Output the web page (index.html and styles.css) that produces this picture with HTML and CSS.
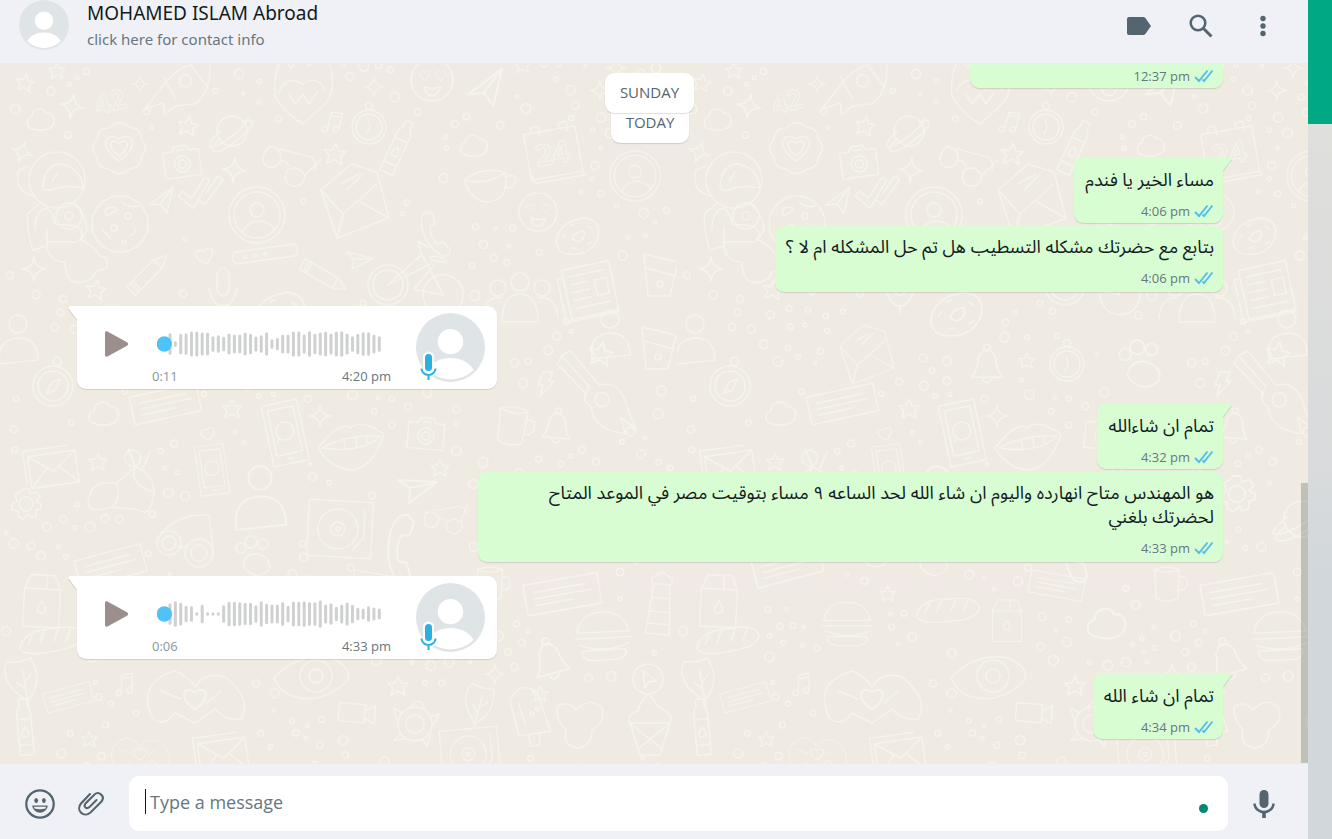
FILE: index.html
```html
<!DOCTYPE html>
<html lang="en">
<head>
<meta charset="utf-8">
<title>Chat</title>
<link rel="stylesheet" href="styles.css">
</head>
<body>
<svg class="defs" aria-hidden="true">
  <symbol id="avatar" viewBox="0 0 212 212"><circle cx="106" cy="106" r="106" fill="#dfe5e7"/><circle cx="106" cy="88" r="39" fill="#fff"/><path d="M35 175C48 150 76 138 106 138s58 12 71 37a101 101 0 0 1-142 0z" fill="#fff"/></symbol>
  <symbol id="ticks" viewBox="0 0 20 14"><path d="M1 8l4 4L13.500 1.500M8.500 10.500l1.500 1.500L18.500 1.500" fill="none" stroke="#53bdeb" stroke-width="1.900"/></symbol>
  <symbol id="tail-out" viewBox="0 0 9 14"><path d="M0 0H7Q9.500 1 8 3L0 14z" fill="#d9fdd3"/><path d="M8.500 3L0 14.500" stroke="#0002" fill="none"/></symbol>
  <symbol id="tail-in" viewBox="0 0 9 14"><path d="M9 0H2Q-.5 1 1 3L9 14z" fill="#fff"/><path d="M.5 3L9 14.500" stroke="#0002" fill="none"/></symbol>
  <symbol id="play" viewBox="0 0 24 26"><path d="M1.500 0Q0 0 0 2V24Q0 26 2 25.800L22.500 14.500Q24 13 22.500 11.500z" fill="#9c8e8c"/></symbol>
  <symbol id="voice-mic" viewBox="0 -4 19 32"><path d="M9.500 4v12" stroke="#fff" stroke-width="11" stroke-linecap="round"/><path d="M2.500 15a7 7 0 0 0 14 0M9.500 22v5" stroke="#fff" stroke-width="5" fill="none"/><path d="M2.500 15.500a7 6.500 0 0 0 14 0M9.500 22v5" stroke="#2bb0e0" stroke-width="2" fill="none"/><rect x="6" y="1" width="7" height="17" rx="3.500" fill="#2bb0e0"/></symbol>
</svg>
<div class="app">
  <main class="main">
    <header class="header">
      <svg class="header-avatar"><use href="#avatar"/></svg>
      <div class="contact">
        <h1 class="contact-name">MOHAMED ISLAM Abroad</h1>
        <span class="contact-info">click here for contact info</span>
      </div>
      <button class="icon-btn" aria-label="Label"><svg width="26" height="20" viewBox="0 0 26 20"><path d="M3 1H17Q18.500 1 19.500 2.200L25 10l-5.500 7.800Q18.500 19 17 19H3Q1 19 1 17V3Q1 1 3 1z" fill="#54656f"/></svg></button>
      <button class="icon-btn" aria-label="Search"><svg width="24" height="24" viewBox="0 0 24 24" fill="none" stroke="#54656f"><circle cx="9" cy="9" r="7.300" stroke-width="2.500"/><path d="M14.500 14.500l8 8" stroke-width="3"/></svg></button>
      <button class="icon-btn" aria-label="Menu"><svg width="6" height="22" viewBox="0 0 6 22" fill="#54656f"><circle cx="3" cy="3.500" r="2.700"/><circle cx="3" cy="11" r="2.700"/><circle cx="3" cy="18.500" r="2.700"/></svg></button>
    </header>
    <section class="chat">
      <svg class="wallpaper" aria-hidden="true">
        <defs>
          <pattern id="doodles" width="677" height="720" patternUnits="userSpaceOnUse"></pattern>
        </defs>
        <rect width="100%" height="100%" fill="url(#doodles)"/>
      </svg>
      <div class="sticky-date"><span class="chip">SUNDAY</span></div>
      <div class="messages">
        <article class="bubble out cut"><div class="meta"><time>12:37 pm</time><svg class="ticks"><use href="#ticks"/></svg></div></article>
        <span class="chip day">TODAY</span>
        <article class="bubble out first"><svg class="tail"><use href="#tail-out"/></svg><p class="text" dir="rtl" lang="ar">مساء الخير يا فندم</p><div class="meta"><time>4:06 pm</time><svg class="ticks"><use href="#ticks"/></svg></div></article>
        <article class="bubble out"><p class="text" dir="rtl" lang="ar">بتابع مع حضرتك مشكله التسطيب هل تم حل المشكله ام لا ؟</p><div class="meta"><time>4:06 pm</time><svg class="ticks"><use href="#ticks"/></svg></div></article>
        <article class="bubble in first">
          <svg class="tail"><use href="#tail-in"/></svg>
          <button class="play" aria-label="Play"><svg width="24" height="26"><use href="#play"/></svg></button>
          <div class="track">
            <svg class="wave" viewBox="0 0 675 90" data-bars="66 17 62 66 76 76 70 70 48 54 44 64 58 58 70 62 46 54 72 30 38 58 58 76 76 60 78 62 70 76 64 76 78 64 48 62 72 72 58 48"></svg>
            <div class="track-meta"><span class="length">0:11</span><time>4:20 pm</time></div>
          </div>
          <div class="voice-photo"><svg class="voice-avatar"><use href="#avatar"/></svg><svg class="voice-mic"><use href="#voice-mic"/></svg></div>
        </article>
        <article class="bubble out first"><svg class="tail"><use href="#tail-out"/></svg><p class="text" dir="rtl" lang="ar">تمام ان شاءالله</p><div class="meta"><time>4:32 pm</time><svg class="ticks"><use href="#ticks"/></svg></div></article>
        <article class="bubble out"><p class="text" dir="rtl" lang="ar">هو المهندس متاح انهارده واليوم ان شاء الله لحد الساعه ٩ مساء بتوقيت مصر في الموعد المتاح لحضرتك بلغني</p><div class="meta"><time>4:33 pm</time><svg class="ticks"><use href="#ticks"/></svg></div></article>
        <article class="bubble in first">
          <svg class="tail"><use href="#tail-in"/></svg>
          <button class="play" aria-label="Play"><svg width="24" height="26"><use href="#play"/></svg></button>
          <div class="track">
            <svg class="wave" viewBox="0 0 675 90" data-bars="66 78 70 50 48 12 56 11 11 11 54 74 74 72 68 68 54 78 62 58 58 72 50 76 74 78 72 72 84 58 66 44 58 70 56 38 34 48 40 34"></svg>
            <div class="track-meta"><span class="length">0:06</span><time>4:33 pm</time></div>
          </div>
          <div class="voice-photo"><svg class="voice-avatar"><use href="#avatar"/></svg><svg class="voice-mic"><use href="#voice-mic"/></svg></div>
        </article>
        <article class="bubble out first"><svg class="tail"><use href="#tail-out"/></svg><p class="text" dir="rtl" lang="ar">تمام ان شاء الله</p><div class="meta"><time>4:34 pm</time><svg class="ticks"><use href="#ticks"/></svg></div></article>
      </div>
      <div class="scrollbar"><div class="thumb"></div></div>
    </section>
    <footer class="composer">
      <button class="tool" aria-label="Emoji"><svg width="30" height="30" viewBox="0 0 30 30"><circle cx="15" cy="15" r="13.700" fill="none" stroke="#54656f" stroke-width="2.300"/><ellipse cx="11.200" cy="11.500" rx="1.900" ry="2.600" fill="#54656f"/><ellipse cx="18.900" cy="11.500" rx="1.900" ry="2.600" fill="#54656f"/><path d="M7.300 16.500H22.700C22 26 8 26 7.300 16.500z" fill="#54656f"/><path d="M9 17.800H21L20.500 19.500Q15 20.800 9.500 19.500z" fill="#f0f1f6"/></svg></button>
      <button class="tool" aria-label="Attach"><svg width="28" height="26" viewBox="0 0 28 26" fill="none" stroke="#54656f" stroke-width="2.100" stroke-linecap="round"><path d="M13 3L4 12.500C-1.500 19 6.500 27.500 13.500 21.500L24.500 10.500C28.500 5.500 22 -.5 17.500 3.500L8.500 12.500C6 16 9.500 18.500 12.500 16L19.500 9"/></svg></button>
      <div class="field">
        <span class="caret"></span>
        <input class="input" type="text" placeholder="Type a message" aria-label="Type a message">
        <span class="dot"></span>
      </div>
      <button class="record" aria-label="Record"><svg width="22" height="28" viewBox="0 0 22 28"><rect x="6.500" y="0" width="9" height="18" rx="4.500" fill="#54656f"/><path d="M1.500 13.500a9.500 8.500 0 0 0 19 0M11 22v6" fill="none" stroke="#54656f" stroke-width="2.400"/><path d="M11 22v6" stroke="#54656f" stroke-width="3.500"/></svg></button>
    </footer>
  </main>
  <aside class="side"></aside>
</div>
<script src="script.js"></script>
</body>
</html>
```
FILE: styles.css
```css
* { box-sizing: border-box; }
body { margin: 0; font-family: "Open Sans", "Noto Sans", "DejaVu Sans", sans-serif; color: #111b21; }
button { border: 0; background: none; padding: 0; display: flex; align-items: center; justify-content: center; }
svg { display: block; flex: none; }
.defs { position: absolute; width: 0; height: 0; }
.app { display: flex; height: 100vh; overflow: hidden; }
.main { flex: 1; min-width: 0; display: flex; flex-direction: column; }
.side { width: 24px; background: linear-gradient(#00a884 124px, #dfdfdc 124px, #d9dbdc 55%, #d1d7db 70%); }

.header { flex: none; display: flex; align-items: flex-start; height: 64px; padding-left: 19px; padding-right: 14px; background: #f0f1f6; border-bottom: 1px solid #e9ebf0; }
.header-avatar { width: 50px; height: 50px; }
.contact { flex: 1; margin-left: 18px; display: flex; flex-direction: column; font-family: "Noto Sans", "Open Sans", sans-serif; }
.contact-name { margin: 0; font-size: 19px; font-weight: 400; line-height: 26px; }
.contact-info { font-size: 15px; line-height: 26px; color: #667781; }
.icon-btn { width: 62px; height: 52px; }

.chat { position: relative; flex: 1; min-height: 0; display: flex; background: #efeae2; overflow: hidden; }
.wallpaper { position: absolute; inset: 0; width: 100%; height: 100%; }
.sticky-date { position: absolute; top: 9px; left: 0; right: 9px; display: flex; justify-content: center; z-index: 2; }
.chip { height: 40px; padding: 0 15px; border-radius: 9px; background: #fff; color: #54656f; font-size: 15px; line-height: 39px; box-shadow: 0 1px 1px #0b141a22; }
.messages { position: relative; flex: 1; display: flex; flex-direction: column; justify-content: flex-end; gap: 3px; padding: 0 78px 25px 77px; }
.day { align-self: center; margin-top: 12px; }
.bubble { position: relative; flex: none; border-radius: 9px; box-shadow: 0 1px 1px #0b141a22; }
.bubble.first { margin-top: 11px; }
.out { align-self: flex-end; max-width: 65%; padding: 9px 9px 4px 11px; background: #d9fdd3; }
.out.first { padding-top: 11px; padding-bottom: 2px; border-top-right-radius: 0; }
.cut { width: 253px; padding-top: 2px; padding-bottom: 2px; border-radius: 0 0 9px 9px; }
.tail { position: absolute; top: 0; width: 9px; height: 14px; }
.out .tail { left: 100%; }
.in .tail { right: 100%; }
.text { margin: 0 0 9px; font-family: "Noto Sans Arabic", "DejaVu Sans", sans-serif; font-size: 18px; line-height: 24px; }
.meta { display: flex; justify-content: flex-end; align-items: center; gap: 4px; height: 20px; font-size: 13px; line-height: 20px; color: #667781; }
.ticks { width: 20px; height: 14px; }
.in { align-self: flex-start; width: 420px; height: 83px; display: flex; background: #fff; border-top-left-radius: 0; padding: 7px 12px 7px 28px; }
.play { width: 24px; height: 62px; }
.track { flex: 1; margin-left: 23px; padding-top: 16px; }
.wave { width: 225px; height: 30px; margin-left: 5px; }
.track-meta { display: flex; justify-content: space-between; width: 239px; margin-top: 7px; font-size: 13px; line-height: 20px; color: #667781; }
.length { color: #8696a0; }
.voice-photo { position: relative; width: 69px; height: 69px; }
.voice-avatar { width: 69px; height: 69px; }
.voice-mic { position: absolute; left: 3px; bottom: 1px; width: 19px; height: 32px; }
.scrollbar { position: relative; width: 7px; display: flex; align-items: flex-end; padding-bottom: 1px; }
.thumb { width: 7px; height: 40%; background: #0b141a33; }

.composer { flex: none; display: flex; align-items: center; padding: 12px 0 8px 14px; background: #f0f1f6; }
.tool { width: 51px; height: 55px; }
.field { flex: 1; display: flex; align-items: center; height: 55px; margin-left: 13px; padding: 0 20px 4px 16px; border-radius: 10px; background: #fff; }
.caret { width: 1px; height: 25px; background: #111b21; }
.input { flex: 1; min-width: 0; border: 0; outline: 0; padding: 0 0 0 4px; background: none; font: 18px/26px "Open Sans", "Noto Sans", sans-serif; color: #111b21; }
.input::placeholder { color: #667781; opacity: 1; }
.dot { width: 9px; height: 9px; margin-top: 14px; border-radius: 50%; background: #008773; }
.record { width: 72px; height: 55px; margin-right: 8px; }

.doodle { fill: none; stroke: #f6f3ed; stroke-width: 1.5px; stroke-linejoin: round; stroke-linecap: round; }
.doodle text { font: 700 30px "Open Sans", sans-serif; stroke-width: 1px; }
```
FILE: script.js
```js
const NS = "http://www.w3.org/2000/svg";

// Waveforms: one rounded stroke per bar, then the playhead.
for (const wave of document.querySelectorAll(".wave")) {
  const d = wave.dataset.bars.split(" ").map((h, i) => {
    const half = Math.max(h / 2 - 5, 0.5);
    return `M${39 + i * 16.1} ${45 - half}v${half * 2}`;
  }).join("");
  wave.innerHTML = `<path d="${d}" stroke="#cfd0d1" stroke-width="9" stroke-linecap="round"/><circle cx="22" cy="45" r="23" fill="#4fc3f7"/>`;
}

// Wallpaper drawings, each centred on its own origin.
const circle = (x, y, r) => `<circle cx="${x}" cy="${y}" r="${r}"/>`;
const path = d => `<path d="${d}"/>`;
const heart = "M0 8C-14 -2 -8 -11 0 -5C8 -11 14 -2 0 8z";
const shapes = {
  star: path("M0-10L3-3L10-3L5 2L7 9L0 5L-7 9L-5 2L-10-3L-3-3z"),
  spark: path("M0-12Q1-1 12 0Q1 1 0 12Q-1 1-12 0Q-1-1 0-12z"),
  heart: path(heart),
  cloud: path("M-8 9C-16 8-15-2-9-3C-9-12 3-13 5-7C14-8 16 4 9 8Q2 12-8 9z"),
  badge: path("M-22-8Q-22-20-10-20Q0-30 10-21Q22-20 22-9Q31 0 22 9Q22 20 11 21Q0 30-10 21Q-22 20-22 9Q-31 0-22-8z") + path(heart) + path("M0 13C-23-3-12-17 0-9C12-17 23-3 0 13z"),
  camera: path("M-18-11H-9L-6-16H6L9-11H18V15H-18z") + circle(0, 2, 8) + circle(0, 2, 4) + path("M-4-12H4"),
  astro: circle(0, -50, 28) + path("M-14-44Q-12-66 4-66Q24-62 26-42Q8-46-6-40Q-15-39-14-44zM-5-48L1-58M-22-34Q-44-38-38-60L-28-64M-18-26L-30-16Q-28 12-24 20L-10 16V-2M16-27Q30-14 30 0L24 10M-10 16Q-8 32 8 32Q8 56 26 52Q36 50 38 42M24 10Q40 18 42 26Q52 26 50 38L38 42M-22 0Q-22-20-10-22Q-2-14-2-6L20-4Q30 4 20 12H-10") + circle(12, -14, 13) + circle(12, -14, 4),
  person: circle(0, 0, 28) + circle(0, 0, 23) + circle(0, -5, 7) + path("M-15 17Q-8 5 4 6Q14 8 17 14"),
  cookie: circle(0, 0, 28) + path("M-15-14Q-8-20-3-14L-14-8zM-18 5l8 9M14 2q4 8-4 9M2-22q6 6 16 4") + circle(-6, 4, 3) + circle(8, -8, 3) + circle(4, 18, 2),
  letter: path("M-34-4L-4-30L22-22L34 24L-18 44zM-34-4L-12 20L22-10M-12 20L-18 44M34 24L5 8M-14-10L4-20M-8-4L8-20"),
  planet: circle(0, 0, 15) + path("M-13 6Q-26 15-20 18Q-12 20 8 7Q24-3 21-7Q18-9 11-7M-12-2Q-34 16-16 12Q6 4 18-10"),
  clock: circle(0, 0, 17) + circle(0, 0, 13) + path("M-1-7Q3 0-2 7") + circle(0, -21, 3.5),
  bottle: path("M-7-12Q-7-20-4-22V-30H4V-22Q7-20 7-12V26H-7zM-7-10H7M-7 16H7M0-2Q-7 8 0 8Q7 8 0-2z"),
  shades: path("M-14-10L18-16Q26-14 27-6M-24-8Q-30 8-18 11Q-8 10-8 0Q-12-12-24-8zM-8 0Q-3-3 2 2M2 6Q2 20 14 18Q24 14 20 3Q8-4 2 6zM20 3L28-18"),
  check: path("M-20 0l5-4l8 8L8-16l5 3L-6 14zM0 6l6 5L26-12l-5-4L8 0"),
  plane: path("M-12 6L12-12L6 14L-1 5zM-1 5L12-12"),
  calendar: path("M-26-22H26V24H-26zM-26 18L-22 28H28L26 24M-18-22V-28H-10V-18M10-22V-28H18V-18") + `<text x="-18" y="12">24</text>`,
  answer: `<text x="-18" y="10">42</text>`,
  cup: path("M-22-8Q0-18 20-8Q20 16 2 18Q-18 18-22-8zQ0 2 20-8M20-4Q32-6 28 4Q22 10 17 6"),
  smile: circle(0, 0, 19) + `<g transform="translate(-7 -4) scale(.55)">${path(heart)}</g><g transform="translate(8 -4) scale(.55)">${path(heart)}</g>` + path("M-7 6Q0 9 8 6Q5 15 0 14Q-6 14-7 6z"),
  donut: path("M-22 6Q-20-14 6-18Q24-16 20 2Q12 20-8 18Q-20 18-22 6z") + path("M-6 3Q-2-6 6-5Q8 3 0 6zM-15 2l2-4M-8-10l4-2M10-10l4 3M10 8l4-2M-6 12h4"),
  phone: path("M-10-22Q-18-20-15-5Q-8 16 6 22Q14 22 13 15L6 8L0 10Q-7 2-7-7L-2-10L-4-20z"),
  bike: circle(-28, 14, 20) + circle(-28, 14, 15) + circle(28, 14, 20) + path("M-28 14L0-22L28 14H-2L14-14M-28 14L10-14M0-22L-6-34L6-30M8-20Q20-26 26-18H10"),
  news: path("M-24-24H24V26H-24zM-24-16H-30V28H24M-18-16H18M-18-8H0M-18 0H0M-18 8H0M-18 16H18M6-8H18V8H6z"),
  pencil: path("M-6-14L0-26L6-14V24H-6zM-6-14H6M-6 16H6M-6 19H6"),
  mic: path("M-6-12Q0-24 6-12V4Q0 16-6 4zM-14 2Q-10 20 0 20Q10 20 14 2M0 20V28"),
  ruler: path("M-30-6H30Q36 0 30 6H-30Q-36 0-30-6z") + circle(-20, 0, 1.5) + circle(-10, 0, 1.5) + circle(0, 0, 1.5),
  note: path("M-4 10V-10L8-12V6M-4-6L8-8") + circle(-7, 10, 3) + circle(5, 7, 3),
  compass: circle(0, 0, 20) + circle(0, 0, 15) + circle(0, -25, 4) + path("M-5 8L-2-3L6-8L3 4z"),
  card: path("M-34-12H34V16H-34zM-26-4H22M-26 2H26M-26 8H10"),
  mobile: path("M-18-30H18V32H-18zM-13-24H13V22H-13zM-3 27H3") + circle(0, -1, 9) + path("M-9 8l3-4"),
  lips: path("M-34 4Q-12-24-2-16Q8-26 32-10Q20 26-2 26Q-22 24-34 4zM-30 4Q-4-10 28-8Q10 10-30 4M-8-4L-6 6M4-6L5 4M14-8L16 0"),
  mug: path("M-14-16Q0-22 14-16L12 16Q0 22-12 16zQ0-10 14-16M14-8Q24-10 22 2Q18 8 13 6"),
  bell: path("M-14 12Q-8 4-8-6Q0-20 8-6Q8 4 14 12zM-4 14Q0 20 4 14") + circle(0, -15, 3),
  guitar: path("M-36-30L-28-36L4-4Q24-12 34 16L44 36L28 26L34 42Q0 40-2 18Q-14 14-6-2zM-36-30L-40-22L-8 6") + circle(8, 10, 7),
  gear: circle(0, 0, 7) + path("M-3-15H3L4-10L10-12L14-7L10-3L15 0V5L10 6L10 12L4 14L2 10L-3 15L-8 12L-8 7L-14 6L-14 0L-9-3L-11-9L-6-12z"),
  record: path("M-32-28H32V28H-32zM24-20V8L14 20") + circle(-2, 0, 20) + circle(-2, 0, 7) + circle(-2, 0, 2),
  goggles: circle(-16, 4, 12) + circle(14, 14, 14) + circle(-16, 4, 7) + circle(14, 14, 8) + path("M-24-6Q-4-26 24-24L28 10M-6 8L2 8"),
  paw: circle(-14, -8, 5) + circle(-4, -14, 6) + circle(8, -12, 5) + path("M-12 10Q-10-4 4-2Q18 4 14 14Q0 26-12 10z"),
  milk: path("M-18-10L-12-24H12L18-10V28H-18zM-18-10H18M4-24V-10M0 2Q-8 14 0 14Q8 14 0 2z"),
  bread: path("M-30 10Q-28-8 0-10Q28-16 32-4Q32 8 4 12Q-24 18-30 10zM-18-4l-4 10M-6-8l-4 12M8-10l-4 12M20-10l-4 12"),
  leaf: path("M0 22Q-26 0-14-20Q0-16 10-20Q20 6 0 22zM0 28V-10M0 4L8-4M0 10L-8 2"),
  hands: path("M-42 20Q-60-16-20-28Q-6-22 0-12Q10-28 30-22Q58 0 46 20Q30 22 20 10L0 24L-20 14Q-30 28-42 20zM-34-8L-14 0M26-8L12 4") + `<g transform="scale(1.3)">${path(heart)}</g>`,
  eye: path("M-38 2Q-14-24 20-18Q40-8 36 4Q10 30-20 20Q-32 16-38 2z") + circle(4, 0, 16) + circle(4, 0, 7),
  turtle: circle(0, 0, 17) + circle(0, 0, 9) + path("M-15-9L-24-12L-18 0M14-10L22-14L18-2M-12 12L-18 20L-6 16M10 14L16 20L17 6M-7-16Q0-30 7-16"),
  video: path("M-18-8H8V10H-18zM8-2L18-8V10L8 6"),
  ice: path("M-18-16Q-6-36 10-20L18 20H-14zM-4 20V32H6V20M-10-12L-6 10") + circle(2, 0, 2) + circle(8, -4, 2),
  blob: path("M-22-16Q-12-22-4-12Q10-26 22-14Q26 0 12 8Q12 24-2 26Q-18 24-14 8Q-26-4-22-16z"),
  cone: path("M-20 4Q-24-4-12-8Q-10-18 0-26Q4-16 12-10Q24-4 20 4zL-10 36H10L20 4M-20 4L12 30M20 4L-12 30"),
  cursor: circle(0, 0, 15) + path("M-5-8L8 2L1 3L-3 9z"),
  burger: path("M-26-4Q-22-24 0-24Q22-24 26-4zM-28 2H28M-24 8Q0 18 26 8M-22 14Q-22 24-10 24H12Q24 22 22 14z"),
  tower: path("M-8-20H8L12 30H-12zM-10-20V-26L0-32L10-26V-20M-9-6H9M-10 8H10M-11 20H11"),
  mail: path("M-26-14H22V18H-26zM-26-14L-2 4L22-14M-26 18L-8 0M22 18L4 0M-30 12V-20H14"),
  bug: path("M-8 30Q-36 44-32 22Q-30 6-8 6L8-14Q36-8 30 24Q28 32 16 28zM-8 6Q0 20-8 30M8-14Q4 4 30 8M8-14L-2-30M16-14L20-32") + circle(4, -22, 8),
  rocket: path("M-30 26L-16 4Q0-24 30-28Q36 0 20 16L0 20L-10 30L-12 18zM-14-8L0 14M10-24L30-2") + circle(8, -6, 6),
  flame: path("M-28 8Q-30-18-20-30L-12-20L0-34L6-22L22-36Q36-4 24 14L0 36Q-20 24-28 8zM-24 4Q-16-14 0-4Q14-14 22 2M-14 6L-8 16L0 6L6 16L14 4"),
  bolt: path("M-3-12H7L3-3H8L-6 12L-3 1H-8z"),
  torso: circle(0, -20, 9) + path("M-18 20Q-22-4 0-6Q20-6 20 16z"),
  flask: path("M-16-22L18-14L10 20H-12zM-14-8L16 0") + circle(0, 8, 3),
  people: circle(-22, -14, 8) + circle(0, -20, 9) + circle(22, -14, 8) + path("M-38 16Q-36-6-18-4M-18 20Q-18-8 0-8Q18-8 18 20zM18-4Q36-6 38 16")
};

const placed = [
  ["astro", 57, 166, 0, 1], ["badge", 119, 84, 0, 1], ["cloud", 41, 56, 0, 1], ["answer", 111, 38, -15, .9], ["rocket", 177, 22, 5, 1], ["camera", 182, 98, -8, 1],
  ["star", 188, 62, 10, 1], ["planet", 232, 67, -8, 1], ["spark", 234, 106, 5, 1], ["shades", 288, 100, 25, 1], ["flame", 303, 24, 0, 1], ["clock", 369, 63, 0, 1],
  ["note", 333, 58, 15, .9], ["star", 335, 90, 5, 1.1], ["bottle", 397, 85, 25, 1], ["letter", 355, 130, 0, 1], ["person", 257, 151, 0, 1], ["check", 198, 130, -5, 1],
  ["plane", 161, 135, 0, 1], ["cookie", 120, 160, 0, 1], ["calendar", 553, 88, -10, 1], ["cup", 487, 120, -10, 1], ["smile", 538, 148, 0, 1], ["person", 635, 112, 0, .9],
  ["donut", 578, 172, 0, 1], ["phone", 437, 170, 0, 1], ["bike", 418, 212, 10, 1], ["news", 590, 225, -12, 1], ["pencil", 148, 210, 45, 1], ["pencil", 323, 212, 120, 1],
  ["mic", 223, 222, 0, 1], ["ruler", 265, 190, -8, 1], ["heart", 205, 192, -15, 1], ["plane", 358, 193, 50, .9], ["spark", 34, 205, 0, 1], ["star", 96, 226, 8, 1],
  ["spark", 72, 42, 10, 1], ["spark", 22, 88, 20, .9], ["star", 25, 19, 10, .9], ["spark", 140, 20, 0, .7], ["flask", 660, 212, 0, 1], ["cloud", 474, 82, 0, 1],
  ["smile", 432, 16, 0, 1.1], ["plane", 485, 22, 0, 1.4], ["torso", 18, 280, 0, 1], ["people", 520, 238, 0, 1], ["torso", 610, 275, 0, 1], ["flask", 658, 285, 0, 1],
  ["compass", 53, 322, 10, 1], ["cloud", 104, 350, 0, 1.1], ["card", 165, 338, -12, 1], ["mobile", 285, 368, -12, 1], ["lips", 352, 380, 0, 1], ["camera", 426, 370, 5, 1],
  ["mug", 512, 362, 8, 1], ["bell", 557, 362, 5, 1], ["guitar", 595, 325, 5, 1], ["mail", 55, 403, -8, 1], ["bug", 125, 415, 10, 1], ["record", 340, 465, 3, 1],
  ["goggles", 185, 475, 0, 1], ["paw", 255, 492, 0, 1], ["gear", 26, 440, 0, 1], ["milk", 42, 535, 3, 1], ["bread", 50, 575, 0, 1], ["leaf", 24, 615, -10, 1],
  ["card", 68, 632, -15, .7], ["bottle", 25, 665, -5, 1], ["hands", 195, 635, 0, 1], ["eye", 312, 612, 0, 1], ["turtle", 415, 660, 10, 1], ["video", 357, 648, 5, 1],
  ["ice", 530, 650, -8, 1], ["blob", 580, 658, 0, 1], ["cone", 650, 655, 0, 1], ["cursor", 648, 615, 0, 1], ["burger", 603, 572, -3, 1], ["bell", 550, 595, -15, 1.2],
  ["tower", 660, 540, 5, 1], ["card", 562, 528, -10, 1.1], ["mobile", 212, 405, -8, .8], ["shades", 445, 455, 0, .8], ["card", 110, 500, -15, 1], ["star", 232, 345, 0, 1],
  ["star", 601, 290, 10, 1.2], ["bolt", 546, 320, 0, 1], ["paw", 465, 300, 0, 1.2], ["heart", 208, 370, -15, .8], ["star", 98, 398, 0, .9], ["spark", 320, 352, 0, .9],
  ["phone", 405, 485, 30, 1.4], ["torso", 260, 440, 0, 1.3], ["plane", 415, 420, 40, 1.3], ["star", 440, 404, 0, .9], ["mail", 225, 690, -8, 1], ["hands", 140, 690, 0, .6],
  ["record", 470, 690, -5, .9], ["leaf", 480, 640, 15, .9], ["star", 398, 622, 0, 1], ["spark", 495, 610, 0, .8], ["star", 540, 630, 0, .8], ["note", 125, 620, 0, .9],
  ["donut", 280, 250, 0, 1.2], ["card", 380, 520, 10, .8], ["bread", 270, 545, 5, 1], ["burger", 170, 560, 0, .9], ["cloud", 430, 560, 0, 1.4], ["milk", 330, 555, 0, .8],
  ["camera", 500, 450, 0, 1], ["gear", 560, 430, 0, 1.2], ["planet", 625, 455, 0, 1.2], ["mug", 490, 520, 0, .9], ["clock", 390, 300, 0, 1], ["letter", 190, 285, 0, .8], ["bell", 310, 300, 0, 1.1]
];

const marks = placed.map(([name, x, y, turn, size]) =>
  `<g transform="translate(${x} ${y}) rotate(${turn}) scale(${size})">${shapes[name]}</g>`);

// Small rings, stars and sparkles fill the space between the drawings.
const wide = { star: 12, spark: 13, heart: 13, cloud: 17, note: 14, plane: 17, bolt: 12, video: 20, gear: 17, bell: 19, camera: 22, smile: 20, cursor: 17, clock: 21, astro: 50, letter: 42, bike: 46, guitar: 42, hands: 46 };
const taken = placed.map(([name, x, y, turn, size]) => [x, y, (wide[name] || 30) * size]);
taken.push([45, 116, 36], [90, 205, 26]);
let seed = 7;
const random = () => (seed = (seed * 16807) % 2147483647) / 2147483647;
for (let i = 0; i < 3000; i++) {
  const x = 6 + random() * 665, y = random() * 712, kind = random();
  const r = kind > .85 ? 10 : 1.5 + random() * 3.5;
  if (taken.some(([a, b, c]) => Math.hypot(a - x, b - y) < c + r + 6)) continue;
  taken.push([x, y, r]);
  marks.push(kind > .85
    ? `<g transform="translate(${x} ${y}) scale(.8)">${kind > .93 ? shapes.star : shapes.spark}</g>`
    : circle(x, y, r));
}
const group = document.createElementNS(NS, "g");
group.setAttribute("class", "doodle");
group.innerHTML = marks.join("");
document.getElementById("doodles").append(group);
```
